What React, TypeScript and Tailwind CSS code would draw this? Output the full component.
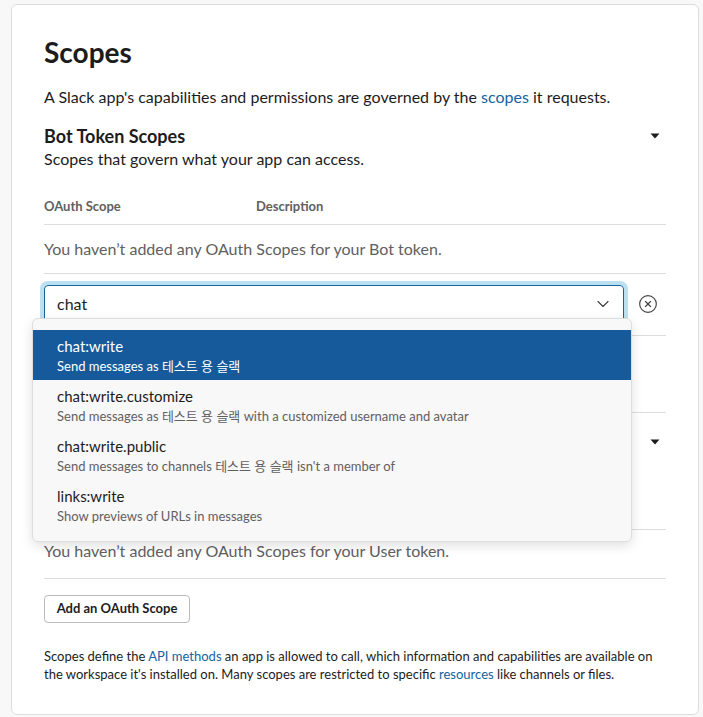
import { ChevronDown, CircleX } from "lucide-react";

const FONT = { fontFamily: '"Lato", "Noto Sans CJK KR", sans-serif' };

const options = [
  { name: "chat:write", desc: "Send messages as 테스트 용 슬랙" },
  { name: "chat:write.customize", desc: "Send messages as 테스트 용 슬랙 with a customized username and avatar" },
  { name: "chat:write.public", desc: "Send messages to channels 테스트 용 슬랙 isn't a member of" },
  { name: "links:write", desc: "Show previews of URLs in messages" },
];

function Caret() {
  return (
    <svg width="10" height="6" viewBox="0 0 10 6" className="mr-[6px]">
      <path d="M0.5 0.5h9L5 5.5z" fill="#1d1c1d" />
    </svg>
  );
}

function TableHeader({ pb }: { pb: string }) {
  return (
    <div className={`flex border-b border-[#dddddd] text-[13px] font-bold leading-[18px] text-[#616061] ${pb}`}>
      <span className="w-[212px]">OAuth Scope</span>
      <span>Description</span>
    </div>
  );
}

function AddButton() {
  return (
    <button className="h-[28px] w-[146px] rounded-[4px] border border-[#bbbbbb] bg-white text-[13px] font-bold text-[#1d1c1d]">
      Add an OAuth Scope
    </button>
  );
}

export default function App() {
  return (
    <div className="min-h-screen bg-[#f8f8f8] pt-[4px]" style={FONT}>
      <div className="ml-[11px] w-[688px] rounded-[6px] border border-[#dddddd] bg-white px-[32px] pt-[29px] pb-[31px] text-[#1d1c1d]">
        <h1 className="text-[28px] font-bold leading-[36px]">Scopes</h1>
        <p className="mt-[16px] text-[16px] leading-[22px]">
          A Slack app's capabilities and permissions are governed by the{" "}
          <span className="text-[#1264a3]">scopes</span> it requests.
        </p>

        {/* Bot token scopes */}
        <div className="mt-[16px] flex items-center justify-between">
          <h2 className="text-[18px] font-bold leading-[24px]">Bot Token Scopes</h2>
          <Caret />
        </div>
        <p className="text-[16px] leading-[22px]">Scopes that govern what your app can access.</p>
        <div className="mt-[27px]">
          <TableHeader pb="pb-[9px]" />
        </div>
        <div className="border-b border-[#dddddd] py-[12px] text-[16px] leading-[24px] text-[#616061]">
          You haven’t added any OAuth Scopes for your Bot token.
        </div>

        <div className="relative border-b border-[#dddddd] pt-[11px] pb-[12px]">
          <div className="flex items-center">
            <div className="flex h-[38px] w-[580px] items-center justify-between rounded-[4px] border border-[#1264a3] pl-[12px] pr-[10px] ring-4 ring-[#1d9bd1]/30">
              <span className="text-[16px]">chat</span>
              <ChevronDown size={20} strokeWidth={1.4} className="text-[#454245]" />
            </div>
            <CircleX size={20} strokeWidth={1.4} className="ml-[14px] text-[#454245]" />
          </div>

          {/* Suggestions */}
          <div className="absolute left-[-12px] top-[44px] z-10 w-[600px] rounded-[6px] border border-[#dddddd] bg-[#f8f8f8] pt-[11px] pb-[11px] shadow-[0_4px_12px_rgba(0,0,0,0.12)]">
            {options.map((o, i) => (
              <div
                key={o.name}
                className={`h-[50px] px-[24px] pt-[6px] ${i === 0 ? "bg-[#165a9b] text-white" : "text-[#1d1c1d]"}`}
              >
                <div className="text-[15px] leading-[21px]">{o.name}</div>
                <div className={`text-[13px] leading-[18px] ${i === 0 ? "text-white" : "text-[#616061]"}`}>{o.desc}</div>
              </div>
            ))}
          </div>
        </div>

        <div className="border-b border-[#dddddd] pt-[18px] pb-[30px]">
          <AddButton />
        </div>

        {/* User token scopes */}
        <div className="mt-[17px] flex items-center justify-between">
          <h2 className="text-[18px] font-bold leading-[24px]">User Token Scopes</h2>
          <Caret />
        </div>
        <p className="text-[16px] leading-[22px]">Scopes that access user data and act on behalf of users that authorize them.</p>
        <div className="mt-[27px]">
          <TableHeader pb="pb-[8px]" />
        </div>
        <div className="border-b border-[#dddddd] pt-[9px] pb-[15px] text-[16px] leading-[24px] text-[#616061]">
          You haven’t added any OAuth Scopes for your User token.
        </div>

        <div className="mt-[16px]">
          <AddButton />
        </div>

        <p className="mt-[24px] text-[13px] leading-[18px]">
          Scopes define the <span className="text-[#1264a3]">API methods</span> an app is allowed to call, which
          information and capabilities are available on the workspace it's installed on. Many scopes are restricted to
          specific <span className="text-[#1264a3]">resources</span> like channels or files.
        </p>
      </div>
    </div>
  );
}
